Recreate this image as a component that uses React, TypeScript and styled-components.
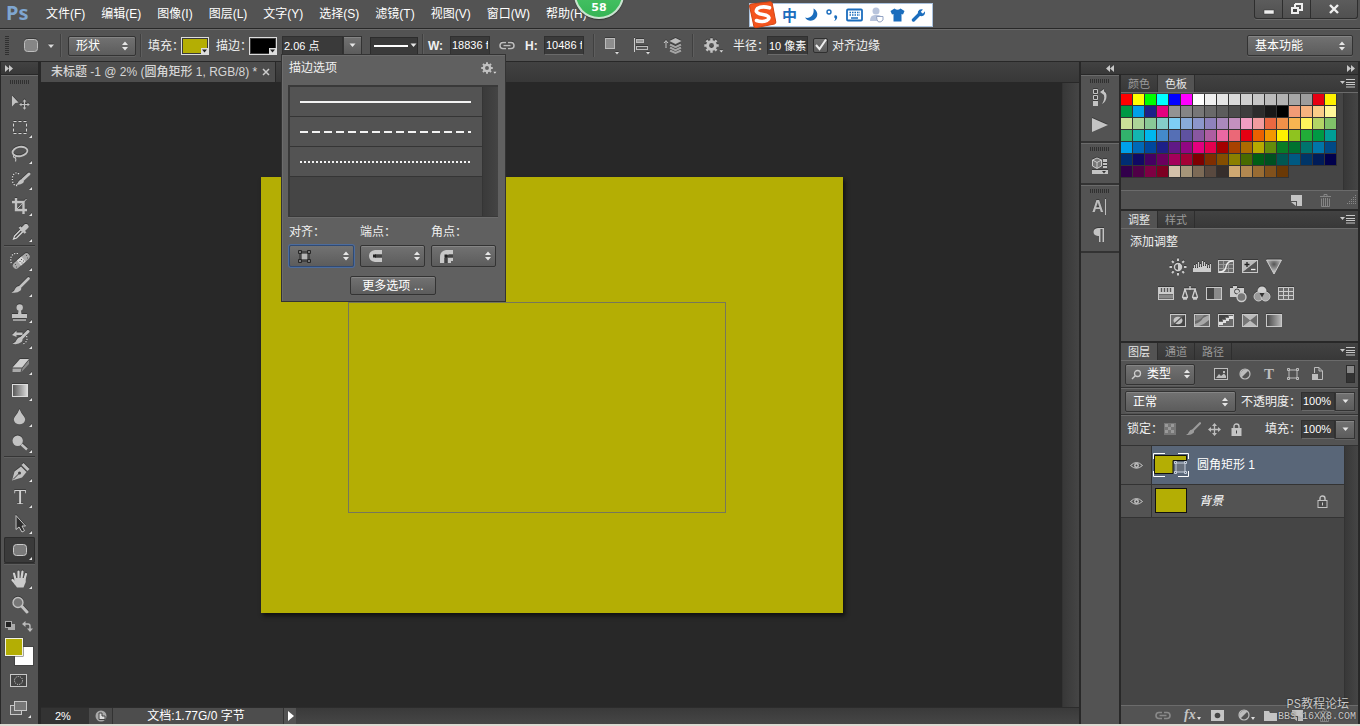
import React from 'react';
import styled, { createGlobalStyle, css } from 'styled-components';

const C = {
  panel: '#535353',
  dark: '#282828',
  line: '#333333',
  sunken: '#3a3a3a',
  list: '#454545',
  light: '#6b6b6b',
  icon: '#c2c2c2',
  olive: '#b4ae04',
};

const GlobalStyle = createGlobalStyle`
  * { box-sizing: border-box; }
  body { margin: 0; background: ${C.dark}; }
  body, button, input, select {
    font-family: "Liberation Sans", "Noto Sans CJK SC", sans-serif;
    font-size: 12px;
    line-height: 16px;
    color: #f0f0f0;
  }
  button { margin: 0; padding: 0; border: 0; background: none; }
  svg { display: block; flex: none; }
`;

/* ---------- shared controls ---------- */

const App_ = styled.div`
  position: relative;
  display: flex;
  flex-direction: column;
  min-height: 100vh;
  background: ${C.dark};
  border-bottom: 2px solid #dcdad2;
  overflow: hidden;
`;

const raised = css`
  background: linear-gradient(#727272, #5c5c5c);
  border: 1px solid ${C.line};
  border-radius: 2px;
  box-shadow: inset 0 1px 0 #858585, 0 1px 0 #626262;
`;

const SelectWrap = styled.span<{ $w: number; $h?: number; $ml?: number }>`
  display: inline-grid;
  grid-template-columns: 1fr 14px;
  align-items: center;
  flex: none;
  width: ${p => p.$w}px;
  height: ${p => p.$h ?? 20}px;
  margin-left: ${p => p.$ml ?? 0}px;
  ${raised}
  select {
    grid-area: 1 / 1 / 2 / 3;
    appearance: none;
    height: 100%;
    width: 100%;
    padding: 0 7px;
    border: 0;
    background: none;
    color: #fff;
  }
  svg { grid-area: 1 / 2 / 2 / 3; pointer-events: none; }
`;

const UpDown = () => (
  <svg width="8" height="12" viewBox="0 0 8 12">
    <path d="M1 5L4 1.5L7 5ZM1 7L4 10.5L7 7Z" fill="#e6e6e6" />
  </svg>
);
const Down = () => (
  <svg width="7" height="5" viewBox="0 0 7 5"><path d="M0.5 0.5H6.5L3.5 4Z" fill="#e6e6e6" /></svg>
);

function Select(p: { id: string; value: string; w: number; h?: number; ml?: number; label?: string }) {
  return (
    <SelectWrap $w={p.w} $h={p.h} $ml={p.ml}>
      <select id={p.id} aria-label={p.label} defaultValue={p.value}><option>{p.value}</option></select>
      <UpDown />
    </SelectWrap>
  );
}

const Input = styled.input<{ $w: number; $ml?: number }>`
  width: ${p => p.$w}px;
  height: 19px;
  flex: none;
  margin-left: ${p => p.$ml ?? 0}px;
  padding: 0 1px 1px;
  font-size: 11px;
  color: #fff;
  background: ${C.sunken};
  border: 1px solid #303030;
  border-bottom-color: #6a6a6a;
  outline: 0;
`;

const DropButton = styled.button<{ $w?: number }>`
  display: grid;
  place-items: center;
  flex: none;
  width: ${p => p.$w ?? 19}px;
  height: 19px;
  ${raised}
  border-radius: 0;
`;

const Label = styled.label<{ $w?: number; $ml?: number }>`
  flex: none;
  width: ${p => (p.$w ? p.$w + 'px' : 'auto')};
  margin-left: ${p => p.$ml ?? 0}px;
  color: #f0f0f0;
  white-space: nowrap;
`;

const IconButton = styled.button<{ $w: number; $ml?: number }>`
  display: flex;
  align-items: center;
  flex: none;
  width: ${p => p.$w}px;
  margin-left: ${p => p.$ml ?? 0}px;
  svg { filter: drop-shadow(0 -1px 0 #3a3a3a); }
`;

/* ---------- menu bar ---------- */

const MenuBar = styled.header`
  position: relative;
  display: flex;
  height: 29px;
  background: ${C.panel};
  border-bottom: 1px solid ${C.dark};
`;
const Logo = styled.div`
  width: 38px;
  padding-left: 6px;
  font: bold 20px/26px "Noto Sans", "Liberation Sans", sans-serif;
  color: #7fa6d0;
`;
const Menu = styled.nav`
  display: flex;
  flex: 1;
`;
const MenuItem = styled.button`
  height: 28px;
  padding: 0 8px;
  color: #fff;
  white-space: nowrap;
`;
const WindowButtons = styled.div`
  display: flex;
  height: 19px;
  margin-right: 2px;
  border: 1px solid #2e2e2e;
  border-top: 0;
  border-radius: 0 0 3px 3px;
  box-shadow: 0 1px 0 #6a6a6a;
  background: linear-gradient(#5c5c5c, #505050);
`;
const WindowButton = styled.button<{ $w: number }>`
  display: grid;
  place-items: center;
  width: ${p => p.$w}px;
  & + & { border-left: 1px solid #2e2e2e; }
`;
const Badge = styled.div`
  position: absolute;
  left: 574px;
  top: -31px;
  width: 50px;
  height: 50px;
  padding-top: 30px;
  border-radius: 50%;
  border: 2px solid #c9e3cf;
  background: linear-gradient(#57d273, #35b455);
  box-shadow: 0 1px 1px #333;
  text-align: center;
  font: bold 11px/14px "DejaVu Sans", sans-serif;
  color: #fff;
  z-index: 3;
`;
const InputMethodBar = styled.div`
  position: absolute;
  left: 749px;
  top: 3px;
  display: flex;
  align-items: center;
  gap: 6px;
  width: 184px;
  height: 24px;
  padding-left: 32px;
  background: #fff;
  border: 1px solid #aac2de;
  z-index: 3;
`;
const ImeLogo = styled.div`
  position: absolute;
  left: -2px;
  top: -3px;
`;
const ImeMode = styled.span`
  width: 16px;
  font: bold 15px/20px "Noto Sans CJK SC", sans-serif;
  color: #1b6dbd;
`;

const menus = ['文件(F)', '编辑(E)', '图像(I)', '图层(L)', '文字(Y)', '选择(S)', '滤镜(T)', '视图(V)', '窗口(W)', '帮助(H)'];

function TopMenu() {
  const b = '#1b6dbd';
  return (
    <MenuBar>
      <Logo>Ps</Logo>
      <Menu>{menus.map(m => <MenuItem key={m}>{m}</MenuItem>)}</Menu>
      <WindowButtons>
        <WindowButton $w={27} aria-label="Minimize">
          <svg width="12" height="12"><rect x="1" y="7" width="10" height="4" fill="#eee" stroke="#333" strokeWidth=".5" /></svg>
        </WindowButton>
        <WindowButton $w={28} aria-label="Restore">
          <svg width="14" height="12"><path d="M5 1H12V7H9M5 1V4" fill="none" stroke="#eee" strokeWidth="2" /><rect x="2" y="5" width="6" height="5" fill="#444" stroke="#eee" strokeWidth="2" /></svg>
        </WindowButton>
        <WindowButton $w={47} aria-label="Close">
          <svg width="12" height="12"><path d="M2 2L10 10M10 2L2 10" stroke="#eee" strokeWidth="2.4" /></svg>
        </WindowButton>
      </WindowButtons>
      <Badge>58</Badge>
      <InputMethodBar>
        <ImeLogo>
          <svg width="29" height="28" viewBox="0 0 29 28">
            <path d="M1.500 5Q1.500 3.500 3 3.100L22 .8Q23.800.600 24.200 2.200L27.800 21Q28 22.600 26.500 23L8 26.700Q6.300 27 5.900 25.300Z" fill="#f4541d" stroke="#d24412" />
            <path d="M21.500 6.800Q14 4.600 9.400 7.600Q6.500 11.200 11.500 12.700L18 14.200Q23.400 16.600 19 19.300Q14 21.600 8.500 19.500" fill="none" stroke="#fff" strokeWidth="3.600" strokeLinecap="round" />
          </svg>
        </ImeLogo>
        <ImeMode>中</ImeMode>
        <svg width="15" height="14" viewBox="0 0 15 14"><path d="M9.500 .5C14 3 14.500 8 11 11C8 13.700 3.500 13.200 1 9.500C5 11 10.800 8 9.500 .5Z" fill={b} /></svg>
        <svg width="15" height="14" viewBox="0 0 15 14"><circle cx="4" cy="4" r="2" fill="none" stroke={b} strokeWidth="1.400" /><path d="M9.500 7.500Q12 6.500 12.200 9Q12 12 9 13Q10.500 11.500 10.200 10.500Q8.500 9.500 9.500 7.500Z" fill={b} /></svg>
        <svg width="17" height="14" viewBox="0 0 17 14"><rect x="1" y="1.500" width="15" height="11" rx="1" fill="none" stroke={b} strokeWidth="1.800" /><path d="M3.500 4.500H14M3.500 7H14" stroke={b} strokeWidth="1.500" strokeDasharray="1.500 1" /><path d="M5 10H12" stroke={b} strokeWidth="1.500" /></svg>
        <svg width="15" height="16" viewBox="0 0 15 16"><circle cx="7" cy="4" r="3.500" fill="#b8c4dc" /><path d="M1 14Q1 8 6 8H9Q12 8 13 11V14Z" fill="#b8c4dc" /><path d="M7.500 9.500H14V13Q12 15.500 9.500 15Q7.500 13 7.500 9.500Z" fill="#fff" stroke="#93a3c4" /></svg>
        <svg width="15" height="14" viewBox="0 0 15 14"><path d="M4.500 .5Q7.500 3 10.500 .5L14.500 3L13 6.500L11.500 6V13.500H3.500V6L2 6.500L.5 3Z" fill={b} /></svg>
        <svg width="15" height="14" viewBox="0 0 15 14"><path d="M2.500 12L9 5.500" stroke={b} strokeWidth="3.400" strokeLinecap="round" /><path d="M12 1.500L9.800 3.700L10.500 5L12 5.400L14 3.200Q14.500 7.500 10.500 8.200Q6 7.500 7 3.500Q8.500 .3 12 1.500Z" fill={b} /></svg>
      </InputMethodBar>
    </MenuBar>
  );
}

/* ---------- options bar ---------- */

const OptionsBar = styled.section`
  position: relative;
  display: flex;
  align-items: center;
  height: 33px;
  padding: 0 7px 0 5px;
  background: ${C.panel};
  border-top: 1px solid ${C.light};
  border-bottom: 1px solid ${C.dark};
  z-index: 2;
`;
const VGrip = styled.span`
  width: 4px;
  height: 19px;
  background: repeating-linear-gradient(#303030 0 1px, transparent 1px 2px);
`;
const HGrip = styled.span`
  width: 20px;
  height: 4px;
  background: repeating-linear-gradient(90deg, #303030 0 1px, transparent 1px 2px);
`;
const VSep = styled.span<{ $ml?: number; $mr?: number }>`
  flex: none;
  width: 2px;
  height: 23px;
  margin: 0 ${p => p.$mr ?? 6}px 0 ${p => p.$ml ?? 4}px;
  background: #404040;
  border-right: 1px solid #5e5e5e;
`;
const ColorWell = styled.button<{ $color: string }>`
  position: relative;
  flex: none;
  width: 28px;
  height: 18px;
  margin-left: 3px;
  background: ${p => p.$color};
  border: 1px solid #ddd;
  outline: 1px solid #3a3a3a;
  outline-offset: -2px;
  svg { position: absolute; right: 0; bottom: 0; }
`;
const LineWell = styled.button`
  display: flex;
  align-items: center;
  gap: 2px;
  flex: none;
  width: 48px;
  height: 18px;
  margin-left: 8px;
  padding-left: 3px;
  background: ${C.sunken};
  border: 1px solid #2c2c2c;
`;
const Stroke = styled.span`
  width: 34px;
  height: 2px;
  background: #fff;
`;
const Anchor = styled.div`
  position: relative;
  display: flex;
  margin-left: 5px;
`;
const CheckLabel = styled.label`
  display: flex;
  align-items: center;
  gap: 4px;
  margin-left: 5px;
  white-space: nowrap;
  input {
    appearance: none;
    width: 15px;
    height: 15px;
    margin: 0;
    grid-area: 1 / 1;
    background: linear-gradient(#707070, #5c5c5c);
    border: 1px solid #303030;
    border-radius: 2px;
  }
  svg { grid-area: 1 / 1; }
`;
const CheckBox = styled.span`
  display: grid;
`;
const Spacer = styled.span`
  flex: 1;
`;

const WellArrow = () => (
  <svg width="7" height="6"><rect width="7" height="6" fill="#ddd" /><path d="M1 1.500H6L3.500 4.500Z" fill="#222" /></svg>
);
const Link = ({ dim }: { dim?: boolean }) => (
  <svg width="16" height="9" viewBox="0 0 16 9" fill="none" stroke={dim ? '#8a8a8a' : '#bdbdbd'} strokeWidth="1.600">
    <path d="M7 1.500H4Q1 1.500 1 4.500Q1 7.500 4 7.500H7M9 1.500H12Q15 1.500 15 4.500Q15 7.500 12 7.500H9M4.500 4.500H11.500" />
  </svg>
);
const Gear = ({ s, dot }: { s: number; dot?: boolean }) => (
  <svg width={s + 5} height={s} viewBox={`0 0 ${(16 * (s + 5)) / s} 16`}>
    <circle cx="8" cy="8" r="4.200" fill="none" stroke={C.icon} strokeWidth="3.200" />
    <path d="M8 .3V3M8 13V15.700M.3 8H3M13 8H15.700M2.600 2.600L4.500 4.500M11.500 11.500L13.400 13.400M2.600 13.400L4.500 11.500M11.500 4.500L13.400 2.600" stroke={C.icon} strokeWidth="2.600" />
    {dot && <path d="M16.500 13H20.500L18.500 15.500Z" fill="#ddd" />}
  </svg>
);

/* ---------- stroke options popup ---------- */

const Popup = styled.div`
  position: absolute;
  left: -1px;
  top: 18px;
  width: 225px;
  padding: 5px 7px 6px 6px;
  background: #606060;
  border: 1px solid ${C.line};
  box-shadow: inset 1px 1px 0 #6c6c6c;
`;
const PopupHead = styled.div`
  display: flex;
  justify-content: space-between;
  align-items: center;
  height: 16px;
  margin-bottom: 9px;
  padding-left: 1px;
`;
const StrokeList = styled.div`
  display: flex;
  height: 132px;
  border: 2px solid #393939;
  border-width: 2px 0 1px 2px;
  background: ${C.list};
  box-shadow: 0 1px 0 #6c6c6c;
`;
const StrokeItems = styled.div`
  flex: 1;
`;
const StrokeItem = styled.button`
  display: flex;
  align-items: center;
  width: 100%;
  height: 30px;
  padding-left: 10px;
  background: ${C.panel};
  border-bottom: 1px solid #353535;
`;
const StrokeScroll = styled.div`
  width: 16px;
  background: linear-gradient(90deg, #3a3a3a, #444);
  border-left: 1px solid #353535;
`;
const Trio = styled.div`
  display: grid;
  grid-template-columns: repeat(3, 65px);
  column-gap: 6px;
  row-gap: 5px;
  margin: 7px 0 9px 1px;
`;
const PopupSelect = styled.button<{ $focus?: boolean }>`
  display: flex;
  align-items: center;
  justify-content: space-between;
  height: 22px;
  padding: 0 3px 0 8px;
  ${raised}
  ${p => p.$focus && 'border-color:#2f4a75; box-shadow: 0 0 0 1px #4d6c9c;'}
`;
const MoreButton = styled.button`
  display: block;
  width: 86px;
  height: 19px;
  margin: 0 auto;
  ${raised}
  color: #fff;
`;

function StrokePopup() {
  return (
    <Popup role="dialog" aria-label="描边选项">
      <PopupHead>描边选项<Gear s={12} dot /></PopupHead>
      <StrokeList>
        <StrokeItems>
          {['', '8 4', '2 2'].map((d, i) => (
            <StrokeItem key={i} aria-label="Stroke">
              <svg width="172" height="4"><path d="M0 2H171" stroke="#f4f4f4" strokeWidth="2" strokeDasharray={d || undefined} /></svg>
            </StrokeItem>
          ))}
        </StrokeItems>
        <StrokeScroll />
      </StrokeList>
      <Trio>
        <span>对齐：</span><span>端点：</span><span>角点：</span>
        <PopupSelect $focus aria-label="对齐">
          <svg width="13" height="13" viewBox="0 0 13 13"><rect x="2" y="2" width="9" height="9" fill="none" stroke="#262626" /><rect x="4" y="4" width="5" height="5" fill="#b5b5b5" /><path d="M.5.500h3v3h-3zM9.500.500h3v3h-3zM.5 9.500h3v3h-3zM9.500 9.500h3v3h-3z" fill="#777" stroke="#262626" /></svg>
          <UpDown />
        </PopupSelect>
        <PopupSelect aria-label="端点">
          <svg width="13" height="12" viewBox="0 0 13 12"><path d="M13 0H6Q0 1 0 6Q0 11 6 12H13V8H6V4H13Z" fill="#c8c8c8" /><path d="M5 6H13" stroke="#222" /><rect x="4" y="4.500" width="3" height="3" fill="#222" /></svg>
          <UpDown />
        </PopupSelect>
        <PopupSelect aria-label="角点">
          <svg width="13" height="13" viewBox="0 0 13 13"><path d="M13 0H6Q0 1 0 7V13H4V8L9 4H13ZM8 8h5v3h-2v2h-3z" fill="#c8c8c8" /><path d="M6 13V6H13" fill="none" stroke="#222" /><rect x="4.500" y="4.500" width="3" height="3" fill="#222" /></svg>
          <UpDown />
        </PopupSelect>
      </Trio>
      <MoreButton>更多选项 ...</MoreButton>
    </Popup>
  );
}

function Options() {
  return (
    <OptionsBar>
      <VGrip />
      <IconButton $w={46} $ml={14} aria-label="Tool preset">
        <svg width="32" height="15" viewBox="0 0 32 15"><rect x="1.500" y="1.500" width="13" height="12" rx="3" fill="#868686" stroke="#bdbdbd" /><path d="M25 6.500H31L28 10Z" fill="#ddd" /></svg>
      </IconButton>
      <VSep $ml={-9} />
      <Select id="mode" label="形状" value="形状" w={68} />
      <VSep />
      <Label $w={30}>填充：</Label>
      <ColorWell $color={C.olive} aria-label="填充"><WellArrow /></ColorWell>
      <Label $w={30} $ml={7}>描边：</Label>
      <ColorWell $color="#000" aria-label="描边"><WellArrow /></ColorWell>
      <Anchor>
        <Input $w={61} defaultValue="2.06 点" aria-label="描边" />
        <DropButton aria-label="描边"><Down /></DropButton>
        <StrokePopup />
      </Anchor>
      <LineWell aria-label="描边选项"><Stroke /><Down /></LineWell>
      <VSep $mr={4} />
      <Label htmlFor="w" $w={18}><b>W:</b></Label>
      <Input id="w" $w={40} $ml={4} defaultValue="18836 f" />
      <IconButton $w={16} $ml={9} aria-label="Link"><Link /></IconButton>
      <Label htmlFor="h" $w={15} $ml={10}><b>H:</b></Label>
      <Input id="h" $w={40} $ml={4} defaultValue="10486 f" />
      <VSep $ml={9} $mr={9} />
      <IconButton $w={16} aria-label="Path operations">
        <svg width="16" height="18" viewBox="0 0 16 18"><rect x="1.500" y="1.500" width="9" height="10" fill="#8d8d8d" stroke="#bbb" /><path d="M11 15H15L13 17.500Z" fill="#ddd" /></svg>
      </IconButton>
      <IconButton $w={18} $ml={13} aria-label="Path alignment">
        <svg width="18" height="18" viewBox="0 0 18 18"><path d="M1.500 1V15" stroke="#ccc" /><rect x="3.500" y="2.500" width="7" height="3" fill="#999" stroke="#bbb" /><rect x="3.500" y="9.500" width="11" height="3" fill="#555" stroke="#bbb" /><path d="M13 15H17L15 17.500Z" fill="#ddd" /></svg>
      </IconButton>
      <IconButton $w={20} $ml={12} aria-label="Path arrangement">
        <svg width="20" height="18" viewBox="0 0 20 18"><path d="M3 4V11M1 6L3 3.500L5 6" fill="none" stroke="#ccc" /><path d="M12.500 1L18.500 4L12.500 7L6.500 4Z" fill="#bdbdbd" /><path d="M7 7.500L12.500 10.200L18 7.500M7 10.500L12.500 13.200L18 10.500M7 13.500L12.500 16L18 13.500" fill="none" stroke="#a5a5a5" strokeWidth="2" /></svg>
      </IconButton>
      <VSep $ml={9} $mr={10} />
      <IconButton $w={21} aria-label="Settings"><Gear s={15} dot /></IconButton>
      <Label htmlFor="r" $w={30} $ml={8}>半径：</Label>
      <Input id="r" $w={41} $ml={4} defaultValue="10 像素" />
      <CheckLabel>
        <CheckBox>
          <input type="checkbox" defaultChecked />
          <svg width="15" height="15" pointerEvents="none"><path d="M3 7L6.500 11L13 1.500" fill="none" stroke="#eee" strokeWidth="2" /></svg>
        </CheckBox>
        对齐边缘
      </CheckLabel>
      <Spacer />
      <Select id="space" label="基本功能" value="基本功能" w={106} h={21} />
    </OptionsBar>
  );
}

/* ---------- tools ---------- */

const Workspace = styled.main`
  display: flex;
  flex: 1;
`;
const DarkHead = styled.div`
  display: flex;
  align-items: center;
  justify-content: space-between;
  height: 13px;
  padding: 0 4px;
  background: linear-gradient(#424242, #383838);
  border-bottom: 1px solid ${C.dark};
`;
const ToolColumn = styled.aside`
  display: flex;
  flex-direction: column;
  width: 41px;
  background: ${C.panel};
  border-left: 1px solid ${C.dark};
  border-right: 3px solid ${C.dark};
`;
const ToolGrip = styled.div`
  display: flex;
  justify-content: center;
  height: 14px;
  padding-top: 4px;
  border-top: 1px solid ${C.light};
`;
const ToolGroup = styled.div`
  display: flex;
  flex-direction: column;
  margin: 0 3px;
  & + & { border-top: 1px solid #353535; box-shadow: inset 0 1px 0 #5f5f5f; padding-top: 2px; }
`;
const Tool = styled.button<{ $on?: boolean }>`
  display: grid;
  place-items: center;
  height: 26px;
  ${p => p.$on && 'background:#3a3a3a; box-shadow: inset 0 0 0 1px #2c2c2c; border-radius:2px;'}
  svg { filter: drop-shadow(0 -1px 0 #3a3a3a); }
`;
const ColorArea = styled.div`
  display: flex;
  flex-direction: column;
  align-items: center;
`;

const Arrows = ({ left }: { left?: boolean }) => (
  <svg width="8" height="7" viewBox="0 0 8 7"><path d={left ? 'M4 0V7L0 3.500ZM8 0V7L4 3.500Z' : 'M0 0V7L4 3.500ZM4 0V7L8 3.500Z'} fill="#c8c8c8" /></svg>
);

const g = C.icon;
const brush = <><path d="M23.500 2.500L15 11" stroke={g} strokeWidth="2.600" strokeLinecap="round" /><path d="M14.500 10Q17.500 12 15.500 14.500Q12 17.500 6.500 16.500Q9.500 15.500 10 13Q11.500 10 14.500 10Z" fill={g} /></>;

const toolGroups: [string, React.ReactNode][][] = [
  [
    ['move', <><path d="M7 4.500L13.500 11.500L10.300 12L7 15.500Z" fill={g} /><path d="M19.500 9.500V17.500M15.500 13.500H23.500" stroke={g} strokeWidth="1.200" /><path d="M19.500 8.200L21.300 10.500H17.700ZM19.500 18.800L17.700 16.500H21.300ZM14.200 13.500L16.500 11.700V15.300ZM24.800 13.500L22.500 15.300V11.700Z" fill={g} /></>],
    ['marquee', <rect x="8.500" y="4.500" width="13" height="12" fill="none" stroke="#d5d5d5" strokeDasharray="3 2" />],
    ['lasso', <><ellipse cx="15" cy="8.500" rx="7.500" ry="4.600" transform="rotate(-10 15 8.500)" fill="none" stroke={g} strokeWidth="1.800" /><path d="M9.500 11Q7.500 14 9.500 14.500Q12 14 10.500 12.500M10 14.500Q11.500 16 10.500 18.500" fill="none" stroke={g} strokeWidth="1.200" /></>],
    ['quick', <><path d="M14 5Q11 2.500 8.500 5.500Q6.500 9 8 14Q9.500 17 12.500 16.500" fill="none" stroke="#ddd" strokeWidth="1.200" strokeDasharray="1.200 1.500" /><path d="M24 5L18 10.500" stroke={g} strokeWidth="3" strokeLinecap="round" /><path d="M17.500 10Q20 12 18 14Q15 16.500 10.500 15.500Q13 14.500 13.500 12.500Q15 10 17.500 10Z" fill={g} /></>],
    ['crop', <><path d="M11 3V15H22M7 7H18.500V19" fill="none" stroke={g} strokeWidth="2.400" /><path d="M12 14L21.500 4" stroke={g} /></>],
    ['eyedropper', <><path d="M16.500 8L9.500 15L8.500 18L11.500 17L18.500 10" fill="#4a4a4a" stroke="#ddd" strokeWidth="1.200" /><path d="M14.500 6L20.500 12" stroke={g} strokeWidth="2.400" /><path d="M18 8.500L21 5.500" stroke={g} strokeWidth="5" strokeLinecap="round" /></>],
  ],
  [
    ['heal', <><path d="M13 3.500Q9 2.500 6.500 6Q5 9 6.500 14" fill="none" stroke="#ddd" strokeWidth="1.200" strokeDasharray="1.200 1.500" /><path d="M11 15.500L21.500 6.500" stroke="#a9a9a9" strokeWidth="6.400" strokeLinecap="round" /><path d="M14 13L18.500 9" stroke="#d8d8d8" strokeWidth="6.400" /><path d="M14.500 11.500h1M16.500 13h1M16 9.500h1M18 11h1M10 14.500h1M11 17h1M21 5.500h1M22 8h1" stroke="#555" /></>],
    ['brush', brush],
    ['stamp', <><circle cx="14.700" cy="5.500" r="3.200" fill={g} /><path d="M13.700 7H15.800L16.500 12H22V16H7V12H13Z" fill={g} /><path d="M8 18H21" stroke={g} strokeWidth="1.400" /></>],
    ['history', <><path d="M23 3.500L16.500 10" stroke={g} strokeWidth="3" strokeLinecap="round" /><path d="M16 9Q18.800 11.500 16.500 14Q13 17 7.500 15.800Q11 14.500 11.500 12Q13 9 16 9Z" fill={g} /><path d="M7 7L11.500 2.500V4.500H17.500V7H11.500V9Z" fill={g} /><path d="M21.500 8Q23 12 20 15L17 16.500" fill="none" stroke="#ddd" strokeWidth="1.200" strokeDasharray="1.200 1.500" /></>],
    ['eraser', <><path d="M7.500 13.500L15 5H24L17 13.500Z" fill="#cfcfcf" /><path d="M7.500 14.500H16.500L15.500 18H7.500Z" fill="#a9a9a9" /><path d="M17.500 14L24 6V10L16.500 18Z" fill="#8a8a8a" /></>],
    ['gradient', <><defs><linearGradient id="tg"><stop stopColor="#555" /><stop offset="1" stopColor="#ddd" /></linearGradient></defs><rect x="7.500" y="4.500" width="15" height="12" fill="url(#tg)" stroke="#ddd" /></>],
    ['blur', <path d="M14.500 3Q16 7 19 10.500Q21.500 14 18.500 17Q14.500 19.500 10.500 17Q7.500 14 10 10.500Q13 7 14.500 3Z" fill={g} />],
    ['dodge', <><circle cx="12.700" cy="8.700" r="5.200" fill={g} /><path d="M16.500 12.500L22 17.500" stroke={g} strokeWidth="2.400" /></>],
  ],
  [
    ['pen', <><path d="M7 19.500L9.500 10.500L16 5.500L21.500 11L17 16.500Z" fill={g} /><path d="M16.500 4L18.500 2L24.500 8L22.500 10Z" fill={g} /><path d="M8 18.500L14 12.500" stroke="#444" /><circle cx="14.500" cy="12" r="1.500" fill="#444" /></>],
    ['type', <text x="15" y="17" textAnchor="middle" fontFamily="Liberation Serif, serif" fontSize="20" fill="#d0d0d0">T</text>],
    ['select', <path d="M11 2.500V16.500L14 14L17 19L19.500 17.700L17 13H20.500Z" fill="#2e2e2e" stroke="#c8c8c8" />],
    ['shape', <rect x="8.500" y="5.500" width="13" height="11" rx="3" fill="#7a7a7a" stroke="#c8c8c8" />],
  ],
  [
    ['hand', <><path d="M10.500 11L9 5.500M13.500 10V3.500M16.500 10L17.500 3.500M19.500 11L21 6M10.500 15.500L7.500 12" stroke="#d0d0d0" strokeWidth="2.200" strokeLinecap="round" /><path d="M9.500 10H20.700Q21.500 14 19.500 17L18.500 19.500H12L9 15.500Z" fill="#cacaca" /></>],
    ['zoom', <><circle cx="13" cy="8.500" r="5" fill="#777" stroke={g} strokeWidth="1.400" /><path d="M17 12.500L22 18" stroke={g} strokeWidth="3" strokeLinecap="round" /></>],
  ],
];
const noCorner = ['move', 'zoom'];

function Tools() {
  return (
    <ToolColumn>
      <DarkHead><Arrows /></DarkHead>
      <ToolGrip><HGrip /></ToolGrip>
      {toolGroups.map((grp, i) => (
        <ToolGroup key={i}>
          {grp.map(([name, art]) => (
            <Tool key={name} $on={name === 'shape'} aria-label={name}>
              <svg width="30" height="22" viewBox="0 0 30 22" fill="none">
                {art}
                {!noCorner.includes(name) && <path d="M27 18V21H24Z" fill="#e6e6e6" />}
              </svg>
            </Tool>
          ))}
        </ToolGroup>
      ))}
      <ColorArea>
        <svg width="36" height="104" viewBox="0 0 36 104">
          <rect x="6" y="6" width="7" height="6" fill="#aaa" /><rect x="3.500" y="3.500" width="6" height="6" fill="#222" stroke="#aaa" />
          <path d="M22 6H26Q28 6 28 8V12" fill="none" stroke="#bbb" strokeWidth="1.400" /><path d="M20 6L23.500 3V9ZM28 14L25 10.500H31Z" fill="#bbb" />
          <rect x="12.500" y="28.500" width="19" height="19" fill="#fff" stroke="#444" />
          <rect x="2.500" y="19.500" width="19" height="19" fill="#444" /><rect x="3.500" y="20.500" width="17" height="17" fill={C.olive} stroke="#f2f2e0" />
          <rect x="8.500" y="56.500" width="16" height="12" fill="#444" stroke="#c8c8c8" /><circle cx="16.500" cy="62.500" r="4" fill="none" stroke="#ddd" strokeDasharray="1 1.200" />
          <rect x="8.500" y="87.500" width="11" height="9" fill="#666" stroke="#c8c8c8" /><rect x="12.500" y="83.500" width="12" height="9" fill="#777" stroke="#c8c8c8" />
          <path d="M29 97V100H26Z" fill="#e6e6e6" />
        </svg>
      </ColorArea>
    </ToolColumn>
  );
}

/* ---------- document ---------- */

const Document = styled.section`
  display: flex;
  flex-direction: column;
  flex: 1;
  min-width: 0;
`;
const DocTabs = styled.div`
  display: flex;
  height: 21px;
  background: linear-gradient(#424242, #383838);
  border-bottom: 1px solid ${C.dark};
`;
const DocTab = styled.div`
  display: flex;
  align-items: center;
  gap: 5px;
  width: 235px;
  padding-left: 10px;
  background: #4d4d4d;
  border-right: 1px solid ${C.dark};
  color: #d6d6d6;
  font-weight: 500;
  white-space: nowrap;
`;
const DocMiddle = styled.div`
  display: flex;
  flex: 1;
`;
const Stage = styled.div`
  display: flex;
  flex: 1;
  align-items: center;
  justify-content: center;
  background: ${C.dark};
`;
const Canvas = styled.div`
  position: relative;
  width: 582px;
  height: 436px;
  background: ${C.olive};
  box-shadow: 2px 3px 4px #111;
`;
const ShapePath = styled.div`
  position: absolute;
  left: 87px;
  top: 125px;
  width: 378px;
  height: 211px;
  border: 1px solid #77775a;
`;
const VScroll = styled.div<{ $w?: number }>`
  flex: none;
  width: ${p => p.$w ?? 17}px;
  background: linear-gradient(90deg, #383838, #454545);
  border-left: 1px solid ${C.line};
`;
const StatusBar = styled.div`
  display: flex;
  height: 17px;
  background: linear-gradient(#3a3a3a, #464646);
  border-top: 1px solid #2c2c2c;
`;
const ZoomInput = styled.input`
  width: 48px;
  padding: 0 0 0 14px;
  border: 0;
  background: #333;
  font-size: 11px;
  color: #fff;
`;
const StatusIcon = styled.button`
  display: grid;
  place-items: center;
  width: 24px;
  background: #4a4a4a;
  border-right: 1px solid #333;
`;
const StatusText = styled.div`
  width: 171px;
  padding-right: 4px;
  background: #4d4d4d;
  border-right: 1px solid #333;
  text-align: center;
  line-height: 16px;
  color: #fff;
`;
const StatusArrow = styled.button`
  display: grid;
  place-items: center;
  width: 12px;
  background: ${C.panel};
`;

function Doc() {
  return (
    <Document>
      <DocTabs>
        <DocTab>未标题 -1 @ 2% (圆角矩形 1, RGB/8) *<svg width="8" height="8"><path d="M1 1L7 7M7 1L1 7" stroke="#ccc" strokeWidth="1.500" /></svg></DocTab>
      </DocTabs>
      <DocMiddle>
        <Stage><Canvas><ShapePath /></Canvas></Stage>
        <VScroll />
      </DocMiddle>
      <StatusBar>
        <ZoomInput defaultValue="2%" aria-label="Zoom" />
        <StatusIcon aria-label="Document">
          <svg width="12" height="12"><circle cx="6" cy="6" r="5.500" fill="#a9a9a9" /><path d="M4 3H7V6H10V9.500H4Z" fill="#ddd" stroke="#444" /></svg>
        </StatusIcon>
        <StatusText>文档:1.77G/0 字节</StatusText>
        <StatusArrow aria-label="More"><svg width="7" height="10"><path d="M1 0L7 5L1 10Z" fill="#fff" /></svg></StatusArrow>
      </StatusBar>
    </Document>
  );
}

/* ---------- right side ---------- */

const RightSide = styled.aside`
  display: flex;
  flex-direction: column;
  width: 281px;
  border-left: 2px solid ${C.dark};
  border-right: 2px solid ${C.dark};
`;
const RightHead = styled(DarkHead)`
  padding: 0 3px 0 25px;
`;
const RightBody = styled.div`
  display: flex;
  flex: 1;
`;
const IconDock = styled.div`
  display: flex;
  flex-direction: column;
  width: 38px;
  background: ${C.panel};
`;
const DockGroup = styled.div`
  display: flex;
  flex-direction: column;
  align-items: center;
  padding: 3px 0 2px;
  border-top: 1px solid ${C.light};
  border-bottom: 2px solid ${C.line};
`;
const DockButton = styled.button<{ $h: number }>`
  display: grid;
  place-items: center;
  width: 100%;
  height: ${p => p.$h}px;
  svg { filter: drop-shadow(0 -1px 0 #3a3a3a); }
`;
const Panels = styled.div`
  display: flex;
  flex-direction: column;
  gap: 2px;
  flex: 1;
  min-width: 0;
  padding-left: 2px;
  background: ${C.dark};
`;
const Panel = styled.section<{ $grow?: boolean }>`
  display: flex;
  flex-direction: column;
  flex: ${p => (p.$grow ? 1 : 'none')};
  background: ${C.panel};
`;
const Tabs = styled.div`
  display: flex;
  align-items: center;
  height: 17px;
  padding-right: 3px;
  background: linear-gradient(#424242, #383838);
`;
const Tab = styled.button<{ $on?: boolean }>`
  height: 17px;
  width: 37px;
  font-size: 11px;
  color: ${p => (p.$on ? '#e6e6e6' : '#9a9a9a')};
  background: ${p => (p.$on ? C.panel : 'none')};
  border-right: 1px solid #2e2e2e;
`;
const PanelMenu = () => (
  <svg width="15" height="9" viewBox="0 0 15 9"><path d="M0 2H5L2.500 5Z" fill="#c8c8c8" /><path d="M6 .5H15M6 3.500H15M6 5.500H15M6 8H15" stroke="#c8c8c8" /></svg>
);
function TabStrip({ tabs, on }: { tabs: string[]; on: number }) {
  return <Tabs>{tabs.map((t, i) => <Tab key={t} $on={i === on}>{t}</Tab>)}<Spacer /><PanelMenu /></Tabs>;
}

const SwatchBody = styled.div`
  display: flex;
  justify-content: space-between;
  height: 98px;
  border-top: 1px solid ${C.light};
  background: ${C.list};
`;
const SwatchGrid = styled.div`
  display: grid;
  grid-template-columns: repeat(18, 12px);
  grid-auto-rows: 12px;
  align-content: start;
  padding-top: 1px;
`;
const Swatch = styled.button<{ $c: string }>`
  background: #${p => p.$c};
  border-right: 1px solid #333;
  border-bottom: 1px solid #333;
`;
const PanelFoot = styled.div`
  display: flex;
  align-items: center;
  height: 19px;
  padding-right: 1px;
  background: ${C.panel};
  border-top: 1px solid ${C.light};
`;

const swatches = `ff0000 ffff00 00ff00 00ffff 0000ff ff00ff ffffff efefef e4e4e4 dadada d0d0d0 c6c6c6 bbbbbb b2b2b2 a6a6a6 9c9c9c e60012 fff100
009944 00a0e9 1d2088 e4007f 939393 858585 777777 696969 5c5c5c 4c4c4c 3e3e3e 2c2c2c 181818 000000 f29b76 f6b37f facd89 fff799
cce198 acd598 89c997 84ccc9 7ecef4 88abda 8c97cb 8f82bc aa89bd c490bf f19ec2 f29c9f eb6841 f19149 f8b551 fff45c b3d465 80c269
32b16c 13b5b1 00b7ee 448aca 556fb5 5f52a0 8957a1 ae5da1 ea68a2 eb6877 e60012 eb6100 f39800 fff100 8fc31f 22ac38 009944 009e96
00a0e9 0068b7 00479d 1d2088 601986 920783 e4007f e5004f a40000 a84200 ac6a00 b7aa00 638c0b 097c25 007130 00736d 0075a9 004986
002e73 100964 440062 6a005f a4005b a40035 7d0000 7f2d00 834e00 8a8000 486a00 005e15 005020 005752 005982 003567 001c58 00004c
32004b 500047 7e0043 7d0022 d3c1aa a59579 7c6a56 59493f 362e2b cfa972 b28850 996c33 81511c 6a3906`.split(/\s+/);

const NewIcon = () => <svg width="11" height="12"><path d="M0 1H11V12H6V7H0Z" fill="#c4c4c4" /><path d="M0 8H5V12Z" fill="#c4c4c4" /></svg>;
const Trash = () => <svg width="11" height="13" fill="none" stroke="#858585"><path d="M0 2.500H11M4 2V.5H7V2M1.500 4.500V12.500H9.500V4.500M3.500 4V12M5.500 4V12M7.500 4V12" /></svg>;
const Gap = styled.span<{ $w: number }>`
  flex: none;
  width: ${p => p.$w}px;
`;

const AdjustBody = styled.div`
  display: flex;
  flex-direction: column;
  height: 113px;
  padding: 5px 36px 0 9px;
  border-top: 1px solid ${C.light};
`;
const AdjustTitle = styled.span`
  margin-bottom: 3px;
`;
const AdjustRow = styled.div`
  display: flex;
  justify-content: center;
  gap: 6px;
  height: 27px;
  align-items: center;
  svg { filter: drop-shadow(0 -1px 0 #3a3a3a); }
`;

const frame = (inner: React.ReactNode) => <><rect x="1.500" y="2.500" width="15" height="12" fill="#6a6a6a" stroke="#c8c8c8" />{inner}</>;
const adjust: React.ReactNode[][] = [
  [
    <><circle cx="9" cy="9" r="3.500" fill="none" stroke="#ccc" strokeWidth="1.400" /><path d="M9 5.500A3.500 3.500 0 0 1 9 12.500Z" fill="#ccc" /><path d="M9 .5V3M9 15V17.500M.5 9H3M15 9H17.500M3 3L4.700 4.700M13.300 13.300L15 15M3 15L4.700 13.300M13.300 4.700L15 3" stroke="#ccc" strokeWidth="2" /></>,
    <path d="M0 10H1V7H2V10H3V6H4V10H5V4H6V9H7V6H8V9H9V3H10V8H11V4H12V8H13V6H14V10H15V7H16V10H17V6H18V14H0Z" fill="#ccc" />,
    frame(<><path d="M2 6.500H16M2 10.500H16M6.500 3V14M11.500 3V14" stroke="#999" /><path d="M2 14Q8 14 9 9Q10 3 16 3" fill="none" stroke="#eee" strokeWidth="1.300" /></>),
    frame(<><path d="M2 14V3H16Z" fill="#bbb" /><path d="M3.500 6.500H8.500M6 4V9" stroke="#222" strokeWidth="1.300" /><path d="M2 14H16V3Z" fill="#555" /><path d="M10 11.500H14.500" stroke="#eee" strokeWidth="1.300" /></>),
    <><defs><radialGradient id="ag" cx=".5" cy=".3" r=".6"><stop stopColor="#555" /><stop offset="1" stopColor="#ccc" /></radialGradient></defs><path d="M1.500 2H16.500L9 16Z" fill="url(#ag)" stroke="#ccc" /></>,
  ],
  [
    frame(<><path d="M2 3H16V9H2Z" fill="#ccc" /><path d="M4.500 3V7M7.500 3V7M10.500 3V7M13.500 3V7" stroke="#555" strokeWidth="1.400" /><path d="M2 11.500H16" stroke="#888" strokeWidth="3" /></>),
    <path d="M9 1V5M3 4H15M4 4L1.500 12M4 4L6.500 12M14 4L11.500 12M14 4L16.500 12M1 12.500H7M11 12.500H17M2 14H6M12 14H16" stroke="#ccc" strokeWidth="1.400" />,
    frame(<><path d="M2 3H9V14H2Z" fill="#444" /><path d="M9 3H16V14H9Z" fill="#8a8a8a" /></>),
    <><path d="M1 3H4V1H8V3H15V12H1Z" fill="#ccc" /><circle cx="8" cy="6.500" r="2.500" fill="none" stroke="#444" /><circle cx="12.500" cy="12" r="4.500" fill="#777" stroke="#ccc" strokeWidth="1.400" /></>,
    <><circle cx="9" cy="6" r="4.500" fill="#d0d0d0" /><circle cx="5.500" cy="11.500" r="4.500" fill="#999" stroke="#ccc" /><circle cx="12.500" cy="11.500" r="4.500" fill="#aaa" stroke="#ccc" /><path d="M6.500 8H11.500L9 12.500Z" fill="#333" /></>,
    frame(<path d="M2 6.500H16M2 10.500H16M6.500 3V14M11.500 3V14" stroke="#ccc" />),
  ],
  [
    frame(<><path d="M2 14L16 3V14Z" fill="#444" /><ellipse cx="9" cy="8.500" rx="4.500" ry="3.800" fill="#c4c4c4" /><path d="M4 13L14 4" stroke="#555" strokeWidth="1.200" /></>),
    frame(<><path d="M2 12Q8 10 10 6L16 3V8Q12 12 6 14H2Z" fill="#a8a8a8" /><path d="M2 9Q8 8 11 3H3Z" fill="#888" /></>),
    frame(<><path d="M2 9H5V7H8V5H11V3H2Z" fill="#444" /><path d="M2 13V10H6V8H9V6H12V4H16V7H12V9H9V11H6V13Z" fill="#e0e0e0" /></>),
    frame(<><path d="M2 3L9 8.500L16 3ZM2 14L9 8.500L16 14Z" fill="#bbb" /><path d="M2 3L9 8.500L2 14Z" fill="#777" /></>),
    <><defs><linearGradient id="ag2"><stop stopColor="#444" /><stop offset="1" stopColor="#bbb" /></linearGradient></defs><rect x="1.500" y="2.500" width="15" height="12" fill="url(#ag2)" stroke="#c8c8c8" /></>,
  ],
];

const LayerRow = styled.div<{ $h: number; $last?: boolean }>`
  display: flex;
  align-items: center;
  height: ${p => p.$h}px;
  padding: 0 3px ${p => (p.$last ? 3 : 0)}px 4px;
  border-top: 1px solid ${C.light};
  border-bottom: ${p => (p.$last ? 0 : 1)}px solid ${C.line};
`;
const SearchSelect = styled.span`
  display: grid;
  grid-template-columns: 21px 1fr 14px;
  align-items: center;
  width: 70px;
  height: 21px;
  ${raised}
  select {
    grid-area: 1 / 1 / 2 / 4;
    appearance: none;
    width: 100%;
    height: 100%;
    padding: 0 0 0 21px;
    border: 0;
    background: none;
    color: #fff;
  }
  svg { pointer-events: none; justify-self: center; grid-area: 1 / 1 / 2 / 2; }
  select + svg { grid-area: 1 / 3 / 2 / 4; }
`;
const FilterIcons = styled.div`
  display: flex;
  gap: 10px;
  margin-left: 19px;
`;
const Layers = styled.div`
  display: flex;
  flex: 1;
  background: ${C.list};
  border-top: 1px solid ${C.line};
`;
const LayerList = styled.div`
  flex: 1;
`;
const Layer = styled.div<{ $h: number; $on?: boolean }>`
  display: flex;
  align-items: center;
  height: ${p => p.$h}px;
  padding-right: 16px;
  background: ${p => (p.$on ? '#596678' : C.panel)};
  border-bottom: 1px solid ${C.line};
  color: #fff;
`;
const EyeCell = styled.button`
  display: grid;
  place-items: center;
  align-self: stretch;
  width: 31px;
  background: ${C.panel};
  border-right: 1px solid ${C.line};
`;
const Name = styled.span<{ $italic?: boolean }>`
  flex: 1;
  margin-left: 8px;
  font-style: ${p => (p.$italic ? 'italic' : 'normal')};
`;
const Eye = () => (
  <svg width="13" height="9" viewBox="0 0 13 9"><path d="M.5 4.500Q6.500-1.500 12.500 4.500Q6.500 10 .5 4.500Z" fill="#555" stroke="#c4c4c4" /><circle cx="6.500" cy="4.500" r="2.400" fill="#c4c4c4" /><circle cx="6.500" cy="4.500" r="1" fill="#444" /></svg>
);
const Lock = ({ outline }: { outline?: boolean }) => (
  <svg width="11" height="13" viewBox="0 0 11 13"><path d="M3 6V3.500Q3 1 5.500 1Q8 1 8 3.500V6" fill="none" stroke="#c4c4c4" strokeWidth="1.400" /><rect x="1" y="5.500" width="9" height="7" fill={outline ? '#4a4a4a' : '#c4c4c4'} stroke="#c4c4c4" /><rect x="5" y="7.500" width="1" height="3" fill={outline ? '#ccc' : '#444'} /></svg>
);
const HalfCircle = () => (
  <svg width="14" height="14" viewBox="0 0 14 14"><circle cx="7" cy="7" r="5" fill="none" stroke="#bdbdbd" strokeWidth="1.200" /><path d="M3.500 10.500A5 5 0 0 1 10.500 3.500Z" fill="#bdbdbd" /></svg>
);
const Fx = styled.i`
  width: 13px;
  font: italic bold 14px/16px "Liberation Serif", serif;
  color: #c4c4c4;
`;
const Corner = () => <svg width="4" height="10"><path d="M0 7H4L2 10Z" fill="#ddd" /></svg>;
const ShapeGlyph = () => (
  <svg width="14" height="14" viewBox="0 0 14 14"><rect x="3" y="3" width="8" height="8" fill="none" stroke="#bdbdbd" /><path d="M1.500 1.500h2v2h-2zM10.500 1.500h2v2h-2zM1.500 10.500h2v2h-2zM10.500 10.500h2v2h-2z" fill="#666" stroke="#bdbdbd" /></svg>
);

function Right() {
  return (
    <RightSide>
      <RightHead><Arrows left /><Arrows /></RightHead>
      <RightBody>
        <IconDock>
          <DockGroup>
            <HGrip />
            <DockButton $h={28} aria-label="History"><svg width="16" height="18"><path d="M1.500 1.500h4v4h-4zM1.500 7.500h4v4h-4z" fill="#444" stroke="#c4c4c4" /><rect x="1" y="13" width="5" height="5" fill="#c4c4c4" /><path d="M8 4L12 1V7ZM11 3Q15 4 14.500 9Q14 14 10 16Q14 9 11 5Z" fill="#c4c4c4" /></svg></DockButton>
            <DockButton $h={28} aria-label="Actions"><svg width="16" height="14"><path d="M0 0L16 7L0 14Z" fill="#c4c4c4" /></svg></DockButton>
          </DockGroup>
          <DockGroup>
            <HGrip />
            <DockButton $h={30} aria-label="Properties"><svg width="16" height="18"><path d="M5 1L9.500 3V9L5 11.500L.5 9V3Z" fill="#777" stroke="#ccc" /><path d="M.5 3L5 5.500L9.500 3M5 5.500V11" fill="none" stroke="#ccc" /><path d="M11 2h4v3h-4zM11 6h4v2h-4zM11 9h4v2h-4z" fill="#c4c4c4" /><rect y="13" width="16" height="4" fill="#c4c4c4" /><path d="M10 14h4l-2 2.500z" fill="#333" /></svg></DockButton>
          </DockGroup>
          <DockGroup>
            <HGrip />
            <DockButton $h={28} aria-label="Character"><svg width="16" height="18"><text x="0" y="14" fontFamily="Liberation Sans" fontWeight="bold" fontSize="16" fill="#bdbdbd">A</text><path d="M13.500 1V17" stroke="#bdbdbd" /></svg></DockButton>
            <DockButton $h={28} aria-label="Paragraph"><svg width="16" height="16"><path d="M12 1H6Q1.500 1.500 1.500 5Q1.500 8.500 6 9H7V15H8.500V2H10.500V15H12Z" fill="#c4c4c4" /></svg></DockButton>
          </DockGroup>
        </IconDock>
        <Panels>
          <Panel>
            <TabStrip tabs={['颜色', '色板']} on={1} />
            <SwatchBody>
              <SwatchGrid>{swatches.map((c, i) => <Swatch key={i} $c={c} aria-label={'#' + c} />)}</SwatchGrid>
              <VScroll $w={15} />
            </SwatchBody>
            <PanelFoot>
              <Spacer /><NewIcon /><Gap $w={18} /><Trash /><Gap $w={16} />
              <svg width="10" height="10"><path d="M8.500 0V10M6.500 2V10M4.500 4V10M2.500 6V10M.5 8V10" stroke="#888" strokeDasharray="1 1" /></svg>
            </PanelFoot>
          </Panel>
          <Panel>
            <TabStrip tabs={['调整', '样式']} on={0} />
            <AdjustBody>
              <AdjustTitle>添加调整</AdjustTitle>
              {adjust.map((row, i) => (
                <AdjustRow key={i}>{row.map((a, j) => <svg key={j} width="18" height="18" viewBox="0 0 18 18" fill="none">{a}</svg>)}</AdjustRow>
              ))}
            </AdjustBody>
          </Panel>
          <Panel $grow>
            <TabStrip tabs={['图层', '通道', '路径']} on={0} />
            <LayerRow $h={28}>
              <SearchSelect>
                <svg width="11" height="11"><circle cx="6.500" cy="4.500" r="3" fill="none" stroke="#ccc" strokeWidth="1.300" /><path d="M4 7L1 10" stroke="#ccc" strokeWidth="1.500" /></svg>
                <select aria-label="类型"><option>类型</option></select>
                <UpDown />
              </SearchSelect>
              <FilterIcons>
                <svg width="14" height="14"><rect x=".5" y="1.500" width="13" height="11" fill="#4a4a4a" stroke="#bdbdbd" /><path d="M2 11L5 7L7 9L10 6.500L12 9V11Z" fill="#bdbdbd" /><rect x="9" y="4" width="2" height="2" fill="#bdbdbd" /></svg>
                <HalfCircle />
                <svg width="14" height="14"><text x="7" y="12" textAnchor="middle" fontFamily="Liberation Serif" fontWeight="bold" fontSize="15" fill="#bdbdbd">T</text></svg>
                <ShapeGlyph />
                <svg width="14" height="14"><path d="M4.500 6V.5H9L12.500 4V12.500H8" fill="#555" stroke="#bdbdbd" /><path d="M9 .5V4H12.500" fill="none" stroke="#bdbdbd" /><rect x="2" y="7" width="6" height="6" fill="#bdbdbd" /></svg>
              </FilterIcons>
              <Spacer />
              <svg width="9" height="18"><rect x=".5" y=".5" width="8" height="17" fill="#333" stroke="#2c2c2c" /><rect x="1" y="1" width="7" height="7" fill="#888" /></svg>
            </LayerRow>
            <LayerRow $h={27}>
              <Select id="blend" label="正常" value="正常" w={111} h={21} />
              <Spacer />
              <Label htmlFor="op">不透明度：</Label>
              <Input id="op" $w={34} defaultValue="100%" />
              <DropButton $w={20} aria-label="不透明度"><Down /></DropButton>
            </LayerRow>
            <LayerRow $h={30} $last>
              <Label $ml={2} $w={37}>锁定：</Label>
              <svg width="12" height="12"><path d="M0 0h12v12H0z" fill="#777" /><path d="M1 1h3v3H1zM7 1h3v3H7zM4 4h3v3H4zM1 7h3v3H1zM7 7h3v3H7z" fill="#999" /></svg>
              <Gap $w={9} />
              <svg width="16" height="14" viewBox="6 1 18 17" fill="none" opacity=".65">{brush}</svg>
              <Gap $w={7} />
              <svg width="13" height="13"><path d="M6.500 2V11M2 6.500H11" stroke="#bdbdbd" strokeWidth="1.300" /><path d="M6.500 0L9 3H4ZM6.500 13L4 10H9ZM0 6.500L3 4V9ZM13 6.500L10 9V4Z" fill="#bdbdbd" /></svg>
              <Gap $w={10} /><Lock />
              <Spacer />
              <Label htmlFor="fill">填充：</Label>
              <Input id="fill" $w={34} defaultValue="100%" />
              <DropButton $w={20} aria-label="填充"><Down /></DropButton>
            </LayerRow>
            <Layers>
              <LayerList>
                <Layer $h={39} $on>
                  <EyeCell aria-label="Visible"><Eye /></EyeCell>
                  <svg width="37" height="24" viewBox="0 0 37 24"><path d="M.5 6V.5H12M25 .5H35.500V6M35.500 18V23.500H25M12 23.500H.5V18" transform="translate(1)" fill="none" stroke="#fff" /><path d="M2.500 2.500H34.500V7.500H21V20.500H2.500Z" fill={C.olive} stroke="#111" /><rect x="24" y="10" width="9" height="9" fill="#68717e" stroke="#c8d0dc" /><path d="M22.500 8.500h2v2h-2zM32.500 8.500h2v2h-2zM22.500 18.500h2v2h-2zM32.500 18.500h2v2h-2z" fill="#596678" stroke="#c8d0dc" /></svg>
                  <Name>圆角矩形 1</Name>
                </Layer>
                <Layer $h={33}>
                  <EyeCell aria-label="Visible"><Eye /></EyeCell>
                  <svg width="36" height="26"><rect x="3.500" y=".5" width="31" height="24" fill={C.olive} stroke="#111" /></svg>
                  <Name $italic>&nbsp;背景</Name>
                  <Lock outline />
                </Layer>
              </LayerList>
              <VScroll $w={14} />
            </Layers>
            <PanelFoot>
              <Gap $w={34} /><Link dim /><Gap $w={13} /><Fx>fx</Fx><Corner /><Gap $w={10} />
              <svg width="13" height="11"><rect width="13" height="11" fill="#c4c4c4" /><circle cx="6.500" cy="5.500" r="2.800" fill="#444" /></svg>
              <Gap $w={13} /><HalfCircle /><Corner /><Gap $w={9} />
              <svg width="13" height="11"><path d="M0 1H5L6 3H13V11H0Z" fill="#c4c4c4" /></svg>
              <Gap $w={15} /><NewIcon /><Gap $w={16} /><Trash />
            </PanelFoot>
          </Panel>
        </Panels>
      </RightBody>
    </RightSide>
  );
}

const Watermark = styled.div`
  position: absolute;
  right: 4px;
  bottom: 1px;
  text-align: right;
  font: 12px/12px "Liberation Mono", "Noto Sans CJK SC", monospace;
  color: #c8c8c8;
  text-shadow: 0 0 2px #222;
  div:first-child { padding-right: 7px; }
  div:last-child { font-size: 10px; }
`;

export default function App() {
  return (
    <App_>
      <GlobalStyle />
      <TopMenu />
      <Options />
      <Workspace>
        <Tools />
        <Doc />
        <Right />
      </Workspace>
      <Watermark><div>PS教程论坛</div><div>BBS.16XX8.COM</div></Watermark>
    </App_>
  );
}
